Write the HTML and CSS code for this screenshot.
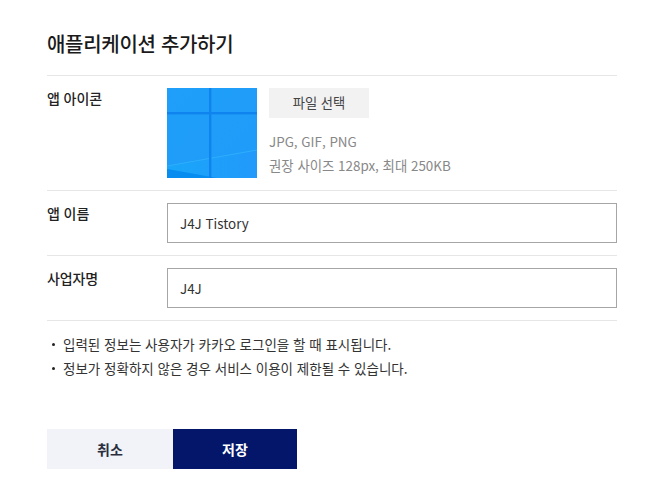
FILE: index.html
```html
<!DOCTYPE html>
<html lang="ko">
<head>
    <meta charset="UTF-8">
    <title>애플리케이션 추가하기</title>
    <link rel="stylesheet" href="styles.css">
</head>
<body>
    <div class="layer">
        <h1>애플리케이션 추가하기</h1>

        <div class="row">
            <div class="row-label">앱 아이콘</div>
            <div class="row-field icon-field">
                <svg class="app-icon" width="90" height="90" viewBox="0 0 90 90">
                    <defs>
                        <linearGradient id="sky" x1="0" y1="0" x2="1" y2="1">
                            <stop offset="0" stop-color="#1f9ff9"/>
                            <stop offset="1" stop-color="#1f9bf9"/>
                        </linearGradient>
                        <linearGradient id="streak" x1="0" y1="0" x2="1" y2="0">
                            <stop offset="0" stop-color="#19a6f9"/>
                            <stop offset="1" stop-color="#2299fb"/>
                        </linearGradient>
                    </defs>
                    <rect width="90" height="90" fill="url(#sky)"/>
                    <polygon points="0,78 90,62 90,90 50,90 0,81" fill="url(#streak)"/>
                    <line x1="0" y1="78" x2="90" y2="62" stroke="#2eaefb" stroke-width="1"/>
                    <polygon points="0,81 50,90 0,90" fill="#078df0"/>
                    <rect x="0" y="24" width="90" height="2.4" fill="#0f84ee"/>
                    <rect x="42" y="0" width="2.4" height="90" fill="#0f84ee"/>
                </svg>
                <div class="file-info">
                    <button class="file-btn">파일 선택</button>
                    <p class="hint">JPG, GIF, PNG</p>
                    <p class="hint">권장 사이즈 128px, 최대 250KB</p>
                </div>
            </div>
        </div>

        <div class="row">
            <div class="row-label">앱 이름</div>
            <div class="row-field">
                <input class="text-input" type="text" value="J4J Tistory">
            </div>
        </div>

        <div class="row">
            <div class="row-label">사업자명</div>
            <div class="row-field">
                <input class="text-input" type="text" value="J4J">
            </div>
        </div>

        <ul class="notes">
            <li>입력된 정보는 사용자가 카카오 로그인을 할 때 표시됩니다.</li>
            <li>정보가 정확하지 않은 경우 서비스 이용이 제한될 수 있습니다.</li>
        </ul>

        <div class="actions">
            <button class="btn btn-cancel">취소</button>
            <button class="btn btn-save">저장</button>
        </div>
    </div>
</body>
</html>
```

FILE: styles.css
```css
* {
    box-sizing: border-box;
}
body {
    margin: 0;
    background-color: #fff;
    color: #222;
    font-family: "Noto Sans CJK KR", "Noto Sans", sans-serif;
}
.layer {
    width: 570px;
    margin-left: 47px;
    padding-top: 29px;
}
h1 {
    margin: 0;
    height: 46px;
    font-size: 20px;
    line-height: 30px;
    font-weight: 500;
    letter-spacing: -0.3px;
    color: #1a1a1a;
}
.row {
    display: flex;
    padding: 12px 0;
    border-top: 1px solid #e6e6e6;
}
.row-label {
    width: 120px;
    font-size: 14px;
    line-height: 20px;
    font-weight: 500;
    letter-spacing: -0.1px;
}
.row-field {
    flex: 1;
}
.icon-field {
    display: flex;
    gap: 12px;
}
.app-icon {
    display: block;
}
.file-btn {
    display: block;
    width: 100px;
    height: 30px;
    margin-bottom: 11px;
    padding: 0 0 2px;
    border: none;
    background-color: #f2f2f2;
    color: #444;
    font: inherit;
    font-size: 13.3px;
}
.hint {
    margin: 0;
    font-size: 13.4px;
    line-height: 24px;
    color: #888;
}
.text-input {
    display: block;
    width: 100%;
    height: 40px;
    padding: 0 12px;
    border: 1px solid #a6a6a6;
    border-radius: 0;
    color: #333;
    font: inherit;
    font-size: 13.4px;
}
.notes {
    list-style: none;
    margin: 0;
    padding: 11px 0 0 0;
    border-top: 1px solid #e6e6e6;
}
.notes li {
    position: relative;
    padding-left: 16px;
    font-size: 13.5px;
    line-height: 24px;
    color: #333;
}
.notes li::before {
    content: "";
    position: absolute;
    left: 5px;
    top: 11px;
    width: 3px;
    height: 3px;
    border-radius: 50%;
    background-color: #222;
}
.actions {
    display: flex;
    margin-top: 49px;
}
.btn {
    height: 40px;
    border: none;
    font: inherit;
    font-size: 14px;
    font-weight: 700;
}
.btn-cancel {
    width: 126px;
    background-color: #f1f3f9;
    color: #2b2f3d;
}
.btn-save {
    width: 124px;
    background-color: #03166a;
    color: #fff;
}
```
